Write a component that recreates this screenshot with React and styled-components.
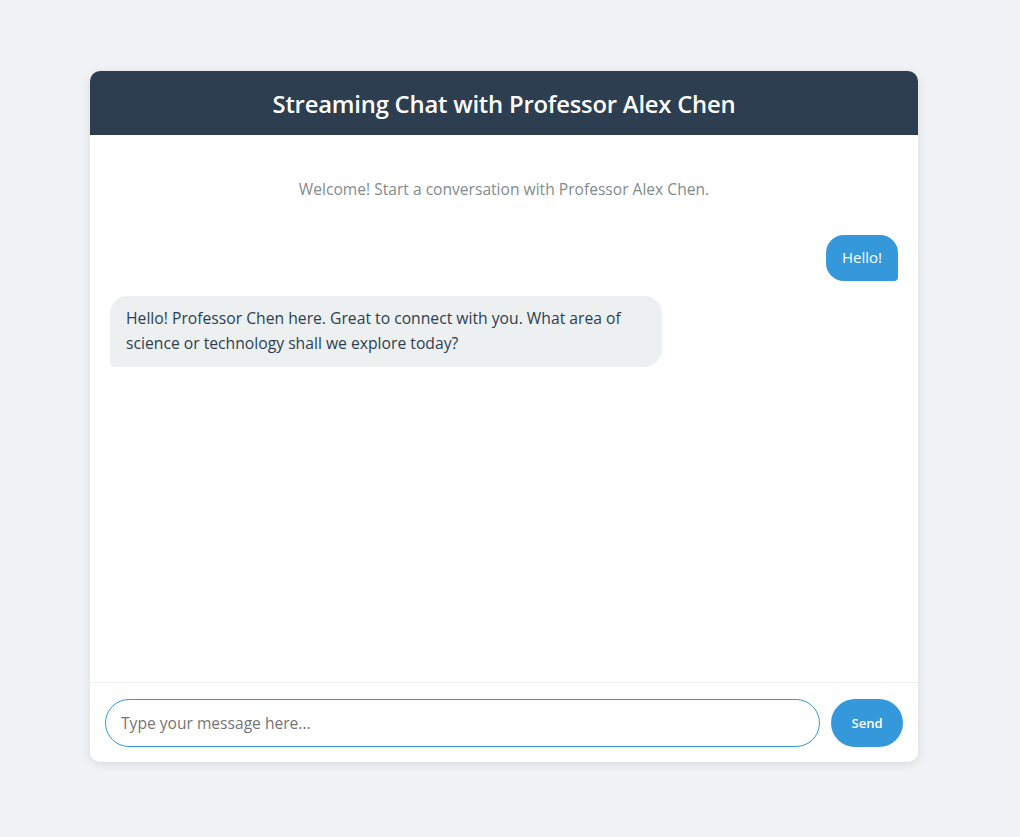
import React, { useState } from 'react';
import styled, { createGlobalStyle } from 'styled-components';

const GlobalStyle = createGlobalStyle`
  * {
    box-sizing: border-box;
  }
  body {
    margin: 0;
    background-color: #f0f2f5;
    font-family: 'Open Sans', 'Noto Sans', sans-serif;
  }
`;

const Page = styled.div`
  width: 100%;
  min-height: 100vh;
  padding: 71px 0 0 90px;
`;

const ChatCard = styled.div`
  display: flex;
  flex-direction: column;
  width: 828px;
  height: 691px;
  background-color: #ffffff;
  border-radius: 10px;
  box-shadow: 0 2px 10px rgba(0, 0, 0, 0.1);
  overflow: hidden;
`;

const Header = styled.div`
  display: flex;
  align-items: center;
  justify-content: center;
  height: 64px;
  background-color: #2c3e50;
  color: #ffffff;
`;

const Title = styled.h1`
  margin: 0 0 -2px;
  font-size: 23.8px;
  font-weight: 600;
  letter-spacing: -0.2px;
`;

const Messages = styled.div`
  flex: 1;
  display: flex;
  flex-direction: column;
  gap: 15px;
  padding: 20px;
  overflow-y: auto;
`;

const Welcome = styled.p`
  margin: 23px 0 20px;
  text-align: center;
  color: #7f8c8d;
  font-size: 15.6px;
`;

const Bubble = styled.div`
  max-width: 70%;
  padding: 10px 16px;
  font-size: ${(p) => (p.$fromUser ? '15px' : '15.7px')};
  line-height: 25.6px;
  border-radius: 18px;
  align-self: ${(p) => (p.$fromUser ? 'flex-end' : 'flex-start')};
  background-color: ${(p) => (p.$fromUser ? '#3498db' : '#ecf0f1')};
  color: ${(p) => (p.$fromUser ? '#ffffff' : '#2c3e50')};
  border-bottom-right-radius: ${(p) => (p.$fromUser ? '4px' : '18px')};
  border-bottom-left-radius: ${(p) => (p.$fromUser ? '18px' : '4px')};
`;

const InputBar = styled.form`
  display: flex;
  align-items: center;
  gap: 11px;
  height: 80px;
  padding: 0 15px;
  border-top: 1px solid #ecf0f1;
`;

const MessageInput = styled.input`
  flex: 1;
  height: 48px;
  padding: 0 15px;
  font-family: inherit;
  font-size: 15.6px;
  color: #2c3e50;
  border: 1px solid #3498db;
  border-radius: 24px;
  outline: none;

  &::placeholder {
    color: #757575;
  }
`;

const SendButton = styled.button`
  width: 72px;
  height: 48px;
  border: none;
  border-radius: 24px;
  background-color: #3498db;
  color: #ffffff;
  font-family: inherit;
  font-size: 13px;
  font-weight: 600;
  cursor: pointer;
`;

const App = () => {
  const [messages] = useState([
    { id: 1, fromUser: true, text: 'Hello!' },
    {
      id: 2,
      fromUser: false,
      text: 'Hello! Professor Chen here. Great to connect with you. What area of science or technology shall we explore today?',
    },
  ]);
  const [draft, setDraft] = useState('');

  return (
    <>
      <GlobalStyle />
      <Page>
        <ChatCard>
          <Header>
            <Title>Streaming Chat with Professor Alex Chen</Title>
          </Header>
          <Messages>
            <Welcome>Welcome! Start a conversation with Professor Alex Chen.</Welcome>
            {messages.map((m) => (
              <Bubble key={m.id} $fromUser={m.fromUser}>
                {m.text}
              </Bubble>
            ))}
          </Messages>
          <InputBar onSubmit={(e) => e.preventDefault()}>
            <MessageInput
              type="text"
              placeholder="Type your message here..."
              value={draft}
              onChange={(e) => setDraft(e.target.value)}
            />
            <SendButton type="submit">Send</SendButton>
          </InputBar>
        </ChatCard>
      </Page>
    </>
  );
};

export default App;
